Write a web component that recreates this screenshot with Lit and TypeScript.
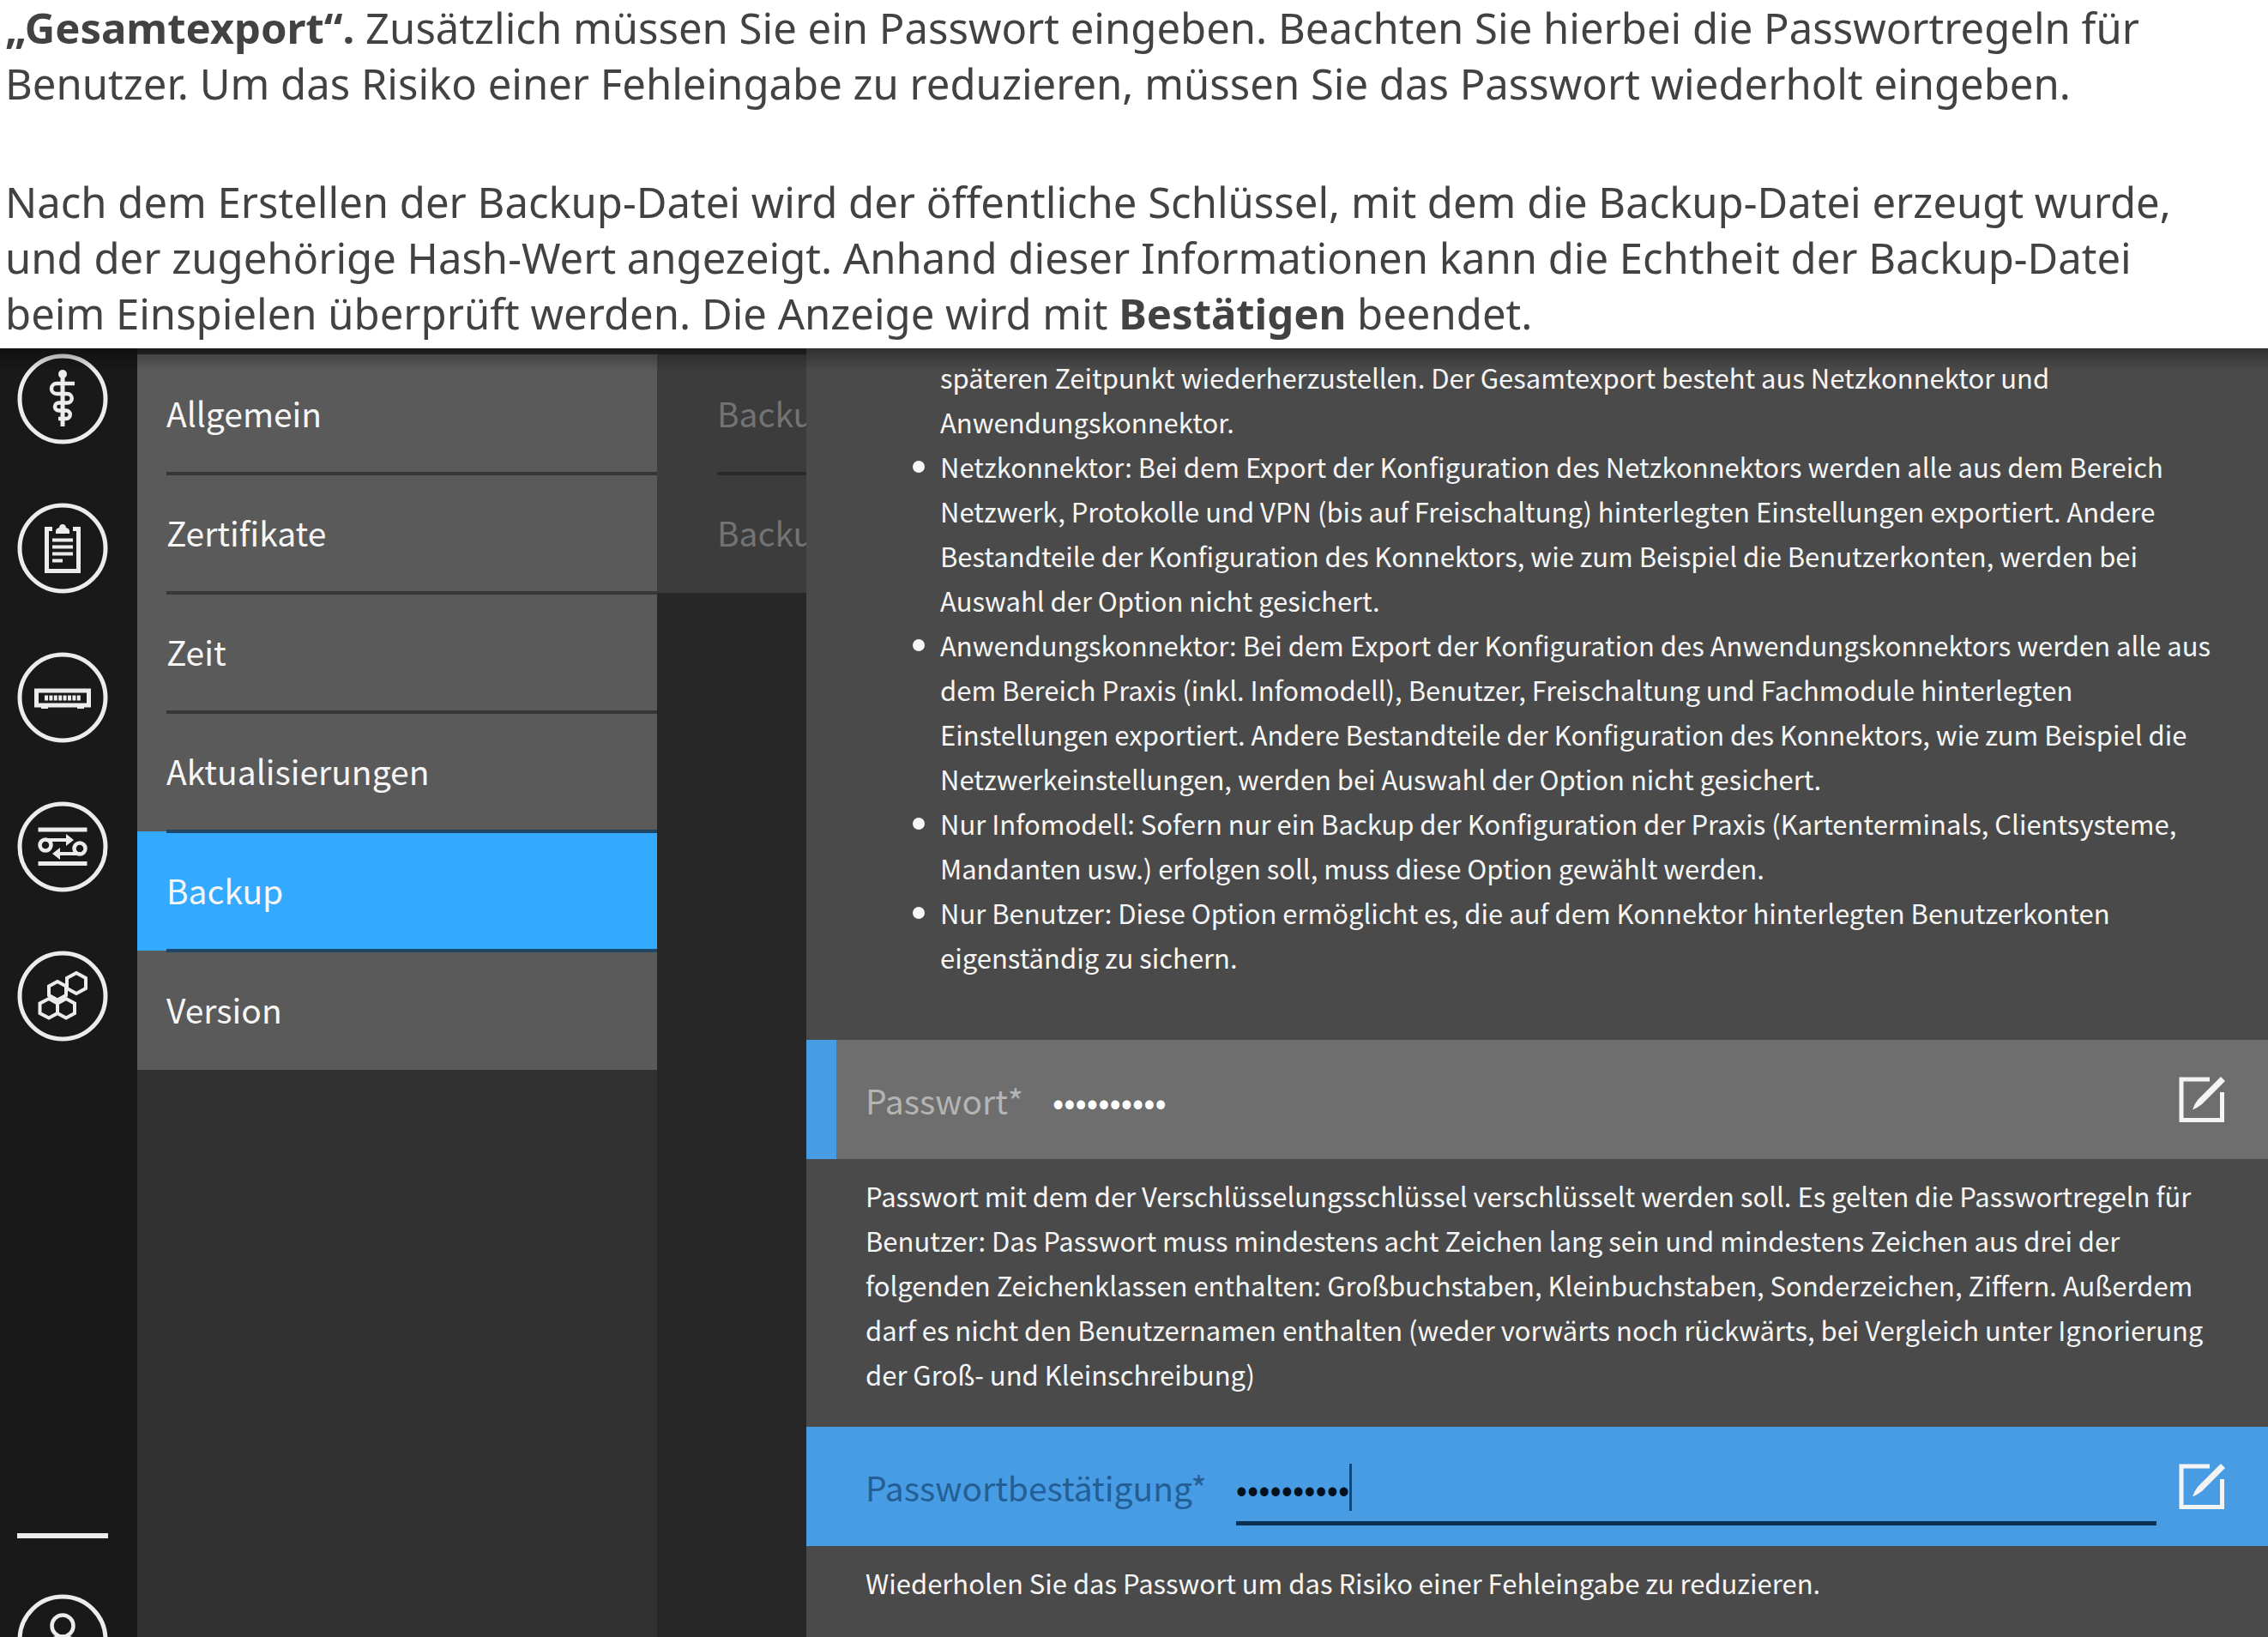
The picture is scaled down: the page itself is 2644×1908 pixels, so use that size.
import { LitElement, html, svg, css, nothing } from "lit";
import { customElement, property } from "lit/decorators.js";
import { classMap } from "lit/directives/class-map.js";

const icons: Record<string, unknown> = {
  praxis: svg`
    <g fill="none" stroke="currentColor">
      <path d="M53 24V85" stroke-width="5" />
      <path d="M67 35H46a6 6 0 0 0 0 12H58.500a5.250 5.250 0 0 1 0 10.500H48.500a4.500 4.500 0 0 0 0 9H57a4.750 4.750 0 0 1 0 9.500H48" stroke-width="4.500" />
    </g>
    <circle cx="53" cy="24" r="5" fill="currentColor" />`,
  protokoll: svg`
    <path d="M41 30.500H34.500V79.500H71.500V30.500H65" fill="none" stroke="currentColor" stroke-width="5" />
    <path d="M45 36v-3q0-3 4-4q.5-4 4-4t4 4q4 1 4 4v3z" fill="currentColor" />
    <path d="M41 43.500H65M41 51.500H65M41 59.500H65M41 67.500H53" stroke="currentColor" stroke-width="4" />`,
  netzwerk: svg`
    <rect x="22.500" y="45" width="61" height="17" fill="none" stroke="currentColor" stroke-width="5" />
    <path d="M32 53.500H74" stroke="currentColor" stroke-width="6" stroke-dasharray="4 1.400" />
    <path d="M28 62h8v4h-8zM70 62h8v4h-8z" fill="currentColor" />`,
  verbindungen: svg`
    <g fill="none" stroke="currentColor" stroke-width="5">
      <path d="M24.500 33H81.500M24.500 72.500H81.500" />
      <circle cx="33" cy="51" r="6.500" stroke-width="4.500" />
      <circle cx="73" cy="55" r="6.500" stroke-width="4.500" />
      <path d="M33 45H60M73 61H48" stroke-width="4" />
    </g>
    <path d="M57 38L66 45L57 52zM50 54L41 61L50 68z" fill="currentColor" />`,
  system: svg`
    <g fill="none" stroke="currentColor" stroke-width="4">
      <path d="M47 36l10 5.500v10.500l-10 5.500l-10-5.500v-10.500z" />
      <path d="M37 56l10 5.500v11.500l-10 5.500l-10.500-5.500v-11.500z" />
      <path d="M57 56l10 5.500v11.500l-10 5.500l-10-5.500v-11.500z" />
      <path d="M69 26l11 6v12l-11 6l-11-6v-12z" />
    </g>`,
  benutzer: svg`
    <g fill="none" stroke="currentColor" stroke-width="4.500">
      <circle cx="53" cy="37" r="12.500" />
      <path d="M30 80c0-20 8-30 23-30s23 10 23 30z" />
    </g>`,
};

/** Round button of the main navigation. */
@customElement("rail-button")
export class RailButton extends LitElement {
  @property() icon = "praxis";
  @property() label = "";

  static styles = css`
    :host { display: block; }
    .round {
      display: block;
      width: 106px;
      height: 106px;
      padding: 0;
      border: 0;
      background: none;
      color: #ececec;
    }
    .glyph { display: block; width: 100%; height: 100%; }
  `;

  render() {
    return html`
      <button class="round" type="button" aria-label=${this.label}>
        <svg class="glyph" viewBox="0 0 106 106" aria-hidden="true">
          <circle cx="53" cy="53" r="50" fill="none" stroke="currentColor" stroke-width="5" />
          ${icons[this.icon]}
        </svg>
      </button>`;
  }
}

/** Labelled password row with an edit button and a help text below it. */
@customElement("password-field")
export class PasswordField extends LitElement {
  @property() label = "";
  @property() value = "";
  @property({ type: Boolean }) active = false;

  static styles = css`
    :host { display: block; }
    .row {
      display: flex;
      align-items: center;
      box-sizing: border-box;
      height: 139px;
      padding: 0 50px 0 34px;
      border-left: 35px solid #489ce4;
      background: #6e6e6e;
      color: #ffffff;
    }
    .row.active { background: #489ce4; color: #04121f; }
    .label { font-size: 39px; color: #b4b4b4; white-space: nowrap; }
    .active .label { color: #235f94; }
    .entry {
      flex: 1;
      align-self: stretch;
      display: flex;
      align-items: center;
      margin: 30px 26px 24px 34px;
      border-bottom: 5px solid transparent;
    }
    .active .entry { border-color: #0b3154; }
    .input {
      field-sizing: content;
      padding: 0;
      border: 0;
      outline: 0;
      background: none;
      color: inherit;
      font: 39px/56px "Noto Sans CJK JP", sans-serif;
    }
    .caret { width: 3px; height: 55px; background: #14466f; }
    .edit { padding: 0; border: 0; background: none; color: #f4f4f4; }
    .pen { display: block; width: 54px; height: 54px; }
    .help { margin: 0; padding: 17px 52px 35px 69px; }
  `;

  render() {
    return html`
      <div class=${classMap({ row: true, active: this.active })}>
        <label class="label" for="field">${this.label}</label>
        <div class="entry">
          <input class="input" id="field" type="password" .value=${this.value} />
          ${this.active ? html`<span class="caret"></span>` : nothing}
        </div>
        <button class="edit" type="button" aria-label="Bearbeiten">
          <svg class="pen" viewBox="0 0 54 54" aria-hidden="true">
            <path d="M36 3H3V50.500H50.500V18" fill="none" stroke="currentColor" stroke-width="5" />
            <path d="M49 0L54 5L27 32Q22 36 16 38.500Q18 32 22 27Z" fill="currentColor" />
          </svg>
        </button>
      </div>
      <p class="help"><slot></slot></p>`;
  }
}

@customElement("app-root")
export class AppRoot extends LitElement {
  private rail = [
    ["praxis", "Praxis"],
    ["protokoll", "Protokoll"],
    ["netzwerk", "Netzwerk"],
    ["verbindungen", "Verbindungen"],
    ["system", "System"],
  ];

  private menu = ["Allgemein", "Zertifikate", "Zeit", "Aktualisierungen", "Backup", "Version"];

  static styles = css`
    :host {
      display: flex;
      flex-direction: column;
      height: 100vh;
      overflow: hidden;
      background: #ffffff;
    }
    .manual {
      flex: none;
      padding: 0 8px 8px 6px;
      color: #424242;
      font: 49px/65px "Noto Sans", sans-serif;
    }
    .para { margin: 0; }
    .para + .para { margin-top: 73px; }
    .workspace {
      position: relative;
      flex: 1;
      min-height: 0;
      display: flex;
      background: #272727;
      font-family: "Noto Sans CJK JP", sans-serif;
    }
    .workspace::before {
      content: "";
      position: absolute;
      inset: 0 0 auto;
      z-index: 2;
      height: 26px;
      background: linear-gradient(rgba(0, 0, 0, 0.35), rgba(0, 0, 0, 0));
      pointer-events: none;
    }
    .rail {
      flex: none;
      display: flex;
      flex-direction: column;
      align-items: center;
      gap: 68px;
      box-sizing: border-box;
      width: 160px;
      padding: 6px 14px 0 0;
      background: #191919;
    }
    .account {
      display: flex;
      flex-direction: column;
      gap: 65px;
      margin: auto 0 -56px;
    }
    .rule { width: 106px; height: 6px; background: #ececec; }
    .menu { flex: none; width: 606px; background: #313131; }
    .sub { flex: none; width: 174px; overflow: hidden; }
    .list {
      margin: 0;
      padding: 0;
      list-style: none;
      border-top: 7px solid #282828;
      background: #5a5a5a;
    }
    .sub .list { background: #3c3c3c; }
    .item {
      position: relative;
      display: flex;
      align-items: center;
      box-sizing: border-box;
      height: 139px;
      padding: 0 0 4px 34px;
      color: #f6f6f6;
      font-size: 39px;
      text-decoration: none;
    }
    .sub .item { padding-left: 70px; color: #737373; }
    .item::after {
      content: "";
      position: absolute;
      z-index: 1;
      left: 34px;
      right: 0;
      bottom: -2px;
      height: 4px;
      background: #373737;
    }
    .sub .item::after { left: 70px; background: #292929; }
    .entry:last-child .item::after { display: none; }
    .item.current { background: #33a9ff; }
    .item.current::after, .item.before::after { background: #1f4664; }
    .panel {
      flex: 1;
      min-width: 0;
      padding-top: 8px;
      overflow: hidden;
      background: #4a4a4a;
      color: #f6f6f6;
      font-size: 31px;
      line-height: 52px;
    }
    .options {
      margin: 0 0 70px;
      padding: 0 52px 0 156px;
      list-style: none;
    }
    .option { position: relative; }
    .option + .option::before {
      content: "";
      position: absolute;
      left: -32px;
      top: 19px;
      width: 14px;
      height: 14px;
      border-radius: 50%;
      background: #f8f8f8;
    }
  `;

  render() {
    const current = this.menu.indexOf("Backup");
    return html`
      <section class="manual">
        <p class="para">
          <b>„Gesamtexport“.</b> Zusätzlich müssen Sie ein Passwort eingeben. Beachten Sie hierbei die Passwortregeln für<br />
          Benutzer. Um das Risiko einer Fehleingabe zu reduzieren, müssen Sie das Passwort wiederholt eingeben.
        </p>
        <p class="para">
          Nach dem Erstellen der Backup-Datei wird der öffentliche Schlüssel, mit dem die Backup-Datei erzeugt wurde,<br />
          und der zugehörige Hash-Wert angezeigt. Anhand dieser Informationen kann die Echtheit der Backup-Datei<br />
          beim Einspielen überprüft werden. Die Anzeige wird mit <b>Bestätigen</b> beendet.
        </p>
      </section>
      <main class="workspace">
        <nav class="rail" aria-label="Bereiche">
          ${this.rail.map(([icon, label]) => html`<rail-button icon=${icon} label=${label}></rail-button>`)}
          <div class="account">
            <div class="rule"></div>
            <rail-button icon="benutzer" label="Benutzerkonto"></rail-button>
          </div>
        </nav>
        <nav class="menu" aria-label="System">
          <ul class="list">
            ${this.menu.map((name, i) => html`
              <li class="entry">
                <a href="#" class=${classMap({ item: true, current: i === current, before: i === current - 1 })}>${name}</a>
              </li>`)}
          </ul>
        </nav>
        <nav class="sub" aria-label="Backup">
          <ul class="list">
            <li class="entry"><a href="#" class="item">Backup</a></li>
            <li class="entry"><a href="#" class="item">Backup</a></li>
          </ul>
        </nav>
        <section class="panel">
          <ul class="options">
            <li class="option">
              späteren Zeitpunkt wiederherzustellen. Der Gesamtexport besteht aus Netzkonnektor und<br />
              Anwendungskonnektor.
            </li>
            <li class="option">
              Netzkonnektor: Bei dem Export der Konfiguration des Netzkonnektors werden alle aus dem Bereich<br />
              Netzwerk, Protokolle und VPN (bis auf Freischaltung) hinterlegten Einstellungen exportiert. Andere<br />
              Bestandteile der Konfiguration des Konnektors, wie zum Beispiel die Benutzerkonten, werden bei<br />
              Auswahl der Option nicht gesichert.
            </li>
            <li class="option">
              Anwendungskonnektor: Bei dem Export der Konfiguration des Anwendungskonnektors werden alle aus<br />
              dem Bereich Praxis (inkl. Infomodell), Benutzer, Freischaltung und Fachmodule hinterlegten<br />
              Einstellungen exportiert. Andere Bestandteile der Konfiguration des Konnektors, wie zum Beispiel die<br />
              Netzwerkeinstellungen, werden bei Auswahl der Option nicht gesichert.
            </li>
            <li class="option">
              Nur Infomodell: Sofern nur ein Backup der Konfiguration der Praxis (Kartenterminals, Clientsysteme,<br />
              Mandanten usw.) erfolgen soll, muss diese Option gewählt werden.
            </li>
            <li class="option">
              Nur Benutzer: Diese Option ermöglicht es, die auf dem Konnektor hinterlegten Benutzerkonten<br />
              eigenständig zu sichern.
            </li>
          </ul>
          <password-field label="Passwort*" value="Backup2021">
            Passwort mit dem der Verschlüsselungsschlüssel verschlüsselt werden soll. Es gelten die Passwortregeln für<br />
            Benutzer: Das Passwort muss mindestens acht Zeichen lang sein und mindestens Zeichen aus drei der<br />
            folgenden Zeichenklassen enthalten: Großbuchstaben, Kleinbuchstaben, Sonderzeichen, Ziffern. Außerdem<br />
            darf es nicht den Benutzernamen enthalten (weder vorwärts noch rückwärts, bei Vergleich unter Ignorierung<br />
            der Groß- und Kleinschreibung)
          </password-field>
          <password-field label="Passwortbestätigung*" value="Backup2021" active>
            Wiederholen Sie das Passwort um das Risiko einer Fehleingabe zu reduzieren.
          </password-field>
        </section>
      </main>`;
  }
}
